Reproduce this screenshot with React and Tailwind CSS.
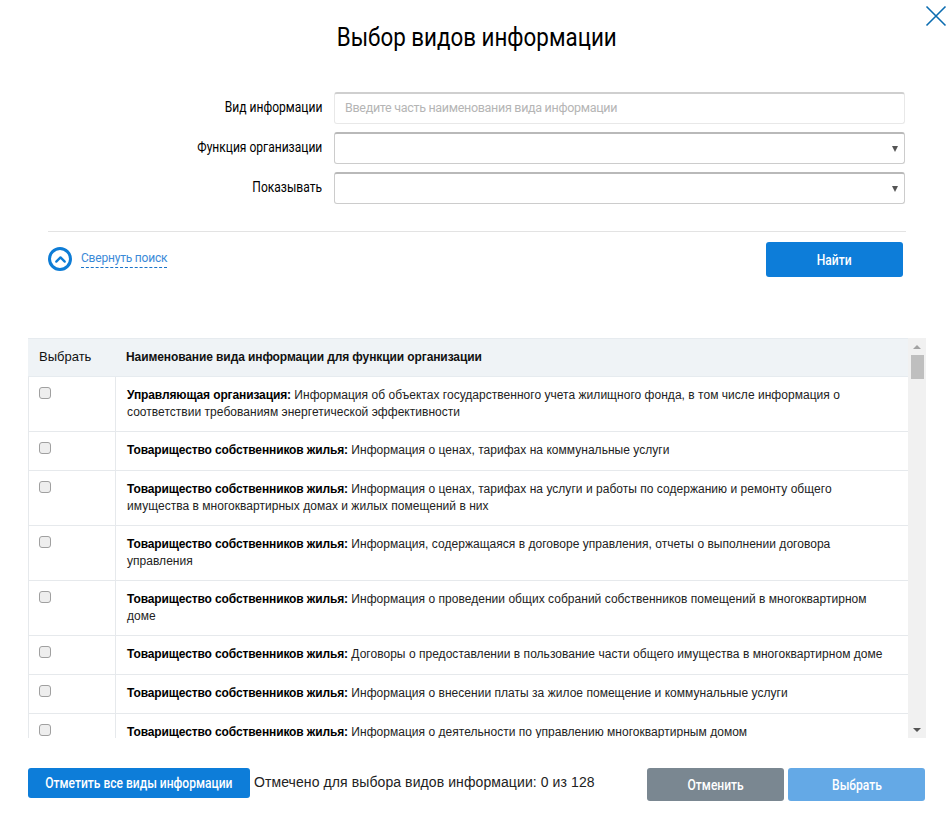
import { ChevronUp } from "lucide-react";

const rows = [
  ["Управляющая организация:", "Информация об объектах государственного учета жилищного фонда, в том числе информация о соответствии требованиям энергетической эффективности"],
  ["Товарищество собственников жилья:", "Информация о ценах, тарифах на коммунальные услуги"],
  ["Товарищество собственников жилья:", "Информация о ценах, тарифах на услуги и работы по содержанию и ремонту общего имущества в многоквартирных домах и жилых помещений в них"],
  ["Товарищество собственников жилья:", "Информация, содержащаяся в договоре управления, отчеты о выполнении договора управления"],
  ["Товарищество собственников жилья:", "Информация о проведении общих собраний собственников помещений в многоквартирном доме"],
  ["Товарищество собственников жилья:", "Договоры о предоставлении в пользование части общего имущества в многоквартирном доме"],
  ["Товарищество собственников жилья:", "Информация о внесении платы за жилое помещение и коммунальные услуги"],
  ["Товарищество собственников жилья:", "Информация о деятельности по управлению многоквартирным домом"],
];

const roboto = "font-['Roboto',sans-serif]";

// no Roboto Condensed installed, so narrow the normal cut
function Narrow({ children, right }) {
  return (
    <span className={`inline-block whitespace-nowrap scale-x-[.86] ${right ? "origin-right" : "origin-center"}`}>
      {children}
    </span>
  );
}

function Label({ children }) {
  return (
    <label className={`w-[322px] shrink-0 text-right text-[14px] leading-[30px] text-black ${roboto}`}>
      <Narrow right>{children}</Narrow>
    </label>
  );
}

function SelectBox() {
  return (
    <div className="ml-3 flex h-8 w-[571px] items-center justify-end rounded-[3px] border border-[#cccccc] border-t-2 border-t-[#b9b9b9] pr-[6px]">
      <span className="h-0 w-0 border-x-[3.5px] border-t-[6px] border-x-transparent border-t-[#555555]" />
    </div>
  );
}

export default function App() {
  return (
    <div className="relative h-[833px] w-[951px] overflow-hidden bg-white font-['Liberation_Sans',Arial,sans-serif]">
      <button className="absolute right-[4px] top-[5px] text-[#0b6cb0]">
        <svg width="22" height="22" viewBox="0 0 22 22" fill="none" stroke="currentColor" strokeWidth="1.6">
          <path d="M1.5 1.5l19 19M20.5 1.5l-19 19" />
        </svg>
      </button>

      <h1 className={`pl-[2px] pt-[19px] text-center text-[26px] leading-9 text-black ${roboto}`}>
        <Narrow>Выбор видов информации</Narrow>
      </h1>

      <form className="mt-[37px] space-y-2">
        <div className="flex">
          <Label>Вид информации</Label>
          <input
            className={`ml-3 h-8 w-[571px] rounded-[3px] border border-[#e8e8e8] border-t-2 border-t-[#cfcfcf] px-[10px] pb-[2px] text-[12.5px] tracking-[-0.3px] outline-none placeholder:text-[#b5b5b5] ${roboto}`}
            placeholder="Введите часть наименования вида информации"
          />
        </div>
        <div className="flex">
          <Label>Функция организации</Label>
          <SelectBox />
        </div>
        <div className="flex">
          <Label>Показывать</Label>
          <SelectBox />
        </div>
      </form>

      <div className="ml-12 mt-[27px] flex w-[858px] items-start justify-between border-t border-[#e3e3e3] pr-[3px] pt-[10px]">
        <div className="mt-[5px] flex items-center">
          <span className="flex h-6 w-6 items-center justify-center rounded-full border-[3px] border-[#0d7cd6] text-[#0d7cd6]">
            <ChevronUp size={17} strokeWidth={3.2} />
          </span>
          <a className={`ml-[9px] border-b border-dashed border-[#1a73c8] pb-[1px] text-[12px] leading-[15px] tracking-[-0.2px] text-[#3b8ad8] ${roboto}`}>
            Свернуть поиск
          </a>
        </div>
        <button className={`h-[35px] w-[137px] rounded-[3px] bg-[#0d7dd9] pt-[2px] text-[14px] font-medium text-white ${roboto}`}>
          <Narrow>Найти</Narrow>
        </button>
      </div>

      <div className="ml-7 mt-[61px] flex h-[400px] w-[898px] overflow-hidden">
        <div className="min-w-0 flex-1">
          <div className="flex h-[39px] items-center border-y border-[#e6ebef] bg-[#eff3f6] pb-[2px] text-[12px] text-[#111111]">
            <div className="w-[88px] pl-[11px] text-[13px]">Выбрать</div>
            <div className="pl-[10px] font-bold tracking-[-0.1px]">Наименование вида информации для функции организации</div>
          </div>
          {rows.map(([org, text], i) => (
            <div key={i} className="flex min-h-[39px] border-b border-[#e6e9ec]">
              <div className="w-[88px] shrink-0 border-x border-[#e6e9ec] pl-[10px] pt-[10px]">
                <input
                  type="checkbox"
                  className="block h-[12px] w-[12px] appearance-none rounded-[3px] border border-[#a0a0a0] bg-[#eeeeee]"
                />
              </div>
              <p className="flex-1 py-[10px] pl-[11px] pr-[20px] text-[12px] leading-[17px] tracking-[0.03px] text-[#222222]">
                <b className="font-bold tracking-[-0.12px] text-black">{org}</b> {text}
              </p>
            </div>
          ))}
        </div>
        <div className="flex w-[18px] shrink-0 flex-col items-center bg-[#f1f1f1]">
          <span className="mt-[7px] h-0 w-0 border-x-[4px] border-b-[4px] border-x-transparent border-b-[#a3a3a3]" />
          <span className="mt-[6px] h-[24px] w-[13px] bg-[#bfbfbf]" />
          <span className="mb-[6px] mt-auto h-0 w-0 border-x-[4px] border-t-[4px] border-x-transparent border-t-[#555555]" />
        </div>
      </div>

      <div className="ml-7 mt-[30px] flex w-[897px] items-start">
        <button className={`h-[30px] w-[222px] rounded-[3px] bg-[#0d7dd9] text-[14px] font-medium text-white ${roboto}`}>
          <Narrow>Отметить все виды информации</Narrow>
        </button>
        <span className="ml-[4px] text-[14px] leading-[28px] tracking-[0.09px] text-[#222222]">Отмечено для выбора видов информации: 0 из 128</span>
        <button className={`ml-auto h-[33px] w-[137px] rounded-[3px] bg-[#7a8791] pt-[1px] text-[14px] font-medium text-white ${roboto}`}>
          <Narrow>Отменить</Narrow>
        </button>
        <button className={`ml-1 h-[33px] w-[137px] rounded-[3px] bg-[#64a9e6] pt-[1px] text-[14px] font-medium text-white ${roboto}`}>
          <Narrow>Выбрать</Narrow>
        </button>
      </div>
    </div>
  );
}
